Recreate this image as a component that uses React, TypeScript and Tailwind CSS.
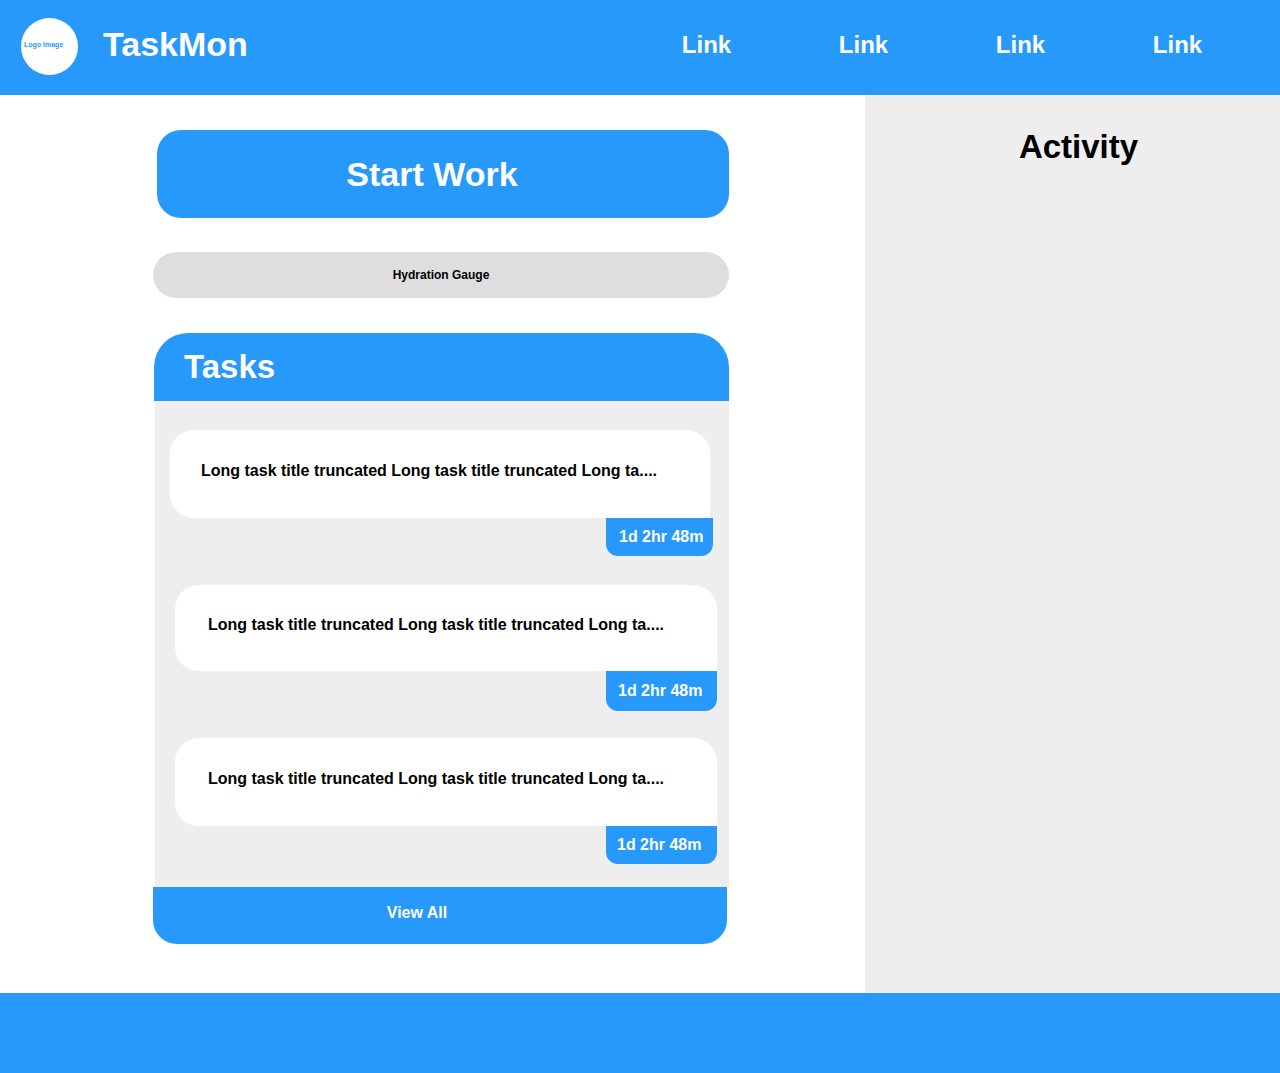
type Task = {
  title: string;
  time: string;
  row: string;
  card: string;
  badge: string;
};

const title = "Long task title truncated Long task title truncated Long ta....";

const tasks: Task[] = [
  {
    title,
    time: "1d 2hr 48m",
    row: "pl-[15px] pr-4",
    card: "mr-[3px] h-[88px] pt-[29px] pl-[31px]",
    badge: "w-[107px] h-[38px] pl-[13px]",
  },
  {
    title,
    time: "1d 2hr 48m",
    row: "pl-5 pr-3",
    card: "h-[86px] pt-7 pl-[33px]",
    badge: "w-[111px] h-10 pl-3",
  },
  {
    title,
    time: "1d 2hr 48m",
    row: "pl-5 pr-3",
    card: "h-[88px] pt-[29px] pl-[33px]",
    badge: "w-[111px] h-[38px] pl-[11px]",
  },
];

const links = ["Link", "Link", "Link", "Link"];

function Header() {
  return (
    <header className="flex h-[95px] items-start justify-between bg-[#2699fb] pl-[21px] pr-6 text-white">
      <div className="flex items-start">
        <div className="mt-[18px] h-[57px] w-[57px] rounded-full bg-white pl-[3px] pt-5 text-[7px] leading-[14px] whitespace-nowrap text-[#2699fb]">
          Logo Image
        </div>
        <h1 className="mt-6 ml-[25px] text-[34px] leading-10">TaskMon</h1>
      </div>
      <nav className="mt-[29px] grid max-w-[628px] flex-1 grid-cols-4 text-center text-2xl">
        {links.map((label, i) => (
          <a key={i} href="#">
            {label}
          </a>
        ))}
      </nav>
    </header>
  );
}

function TaskItem({ task }: { task: Task }) {
  return (
    <li className={`flex flex-col ${task.row}`}>
      <div className={`rounded-3xl rounded-br-none bg-white ${task.card}`}>
        <p className="truncate">{task.title}</p>
      </div>
      <div className={`flex items-center self-end rounded-b-xl bg-[#2699fb] whitespace-nowrap text-white ${task.badge}`}>
        {task.time}
      </div>
    </li>
  );
}

export default function App() {
  return (
    <div className="flex min-h-screen flex-col bg-white font-['Liberation_Sans',Arial,sans-serif] text-base font-bold text-black">
      <Header />
      <div className="flex flex-1">
        <main className="min-w-0 flex-1 pt-[35px] pr-[136px] pb-[49px] pl-[153px]">
          <div className="pl-1">
            <button
              type="button"
              className="h-[88px] w-full rounded-3xl bg-[#2699fb] pr-[22px] text-[34px] leading-10 text-white"
            >
              Start Work
            </button>
          </div>
          <div className="mt-[34px] flex h-[46px] items-center justify-center rounded-full bg-[#dedede] text-xs">
            Hydration Gauge
          </div>
          <section className="mt-[35px]">
            <h2 className="ml-px h-[68px] rounded-t-[34px] bg-[#2699fb] pt-[14px] pl-[30px] text-[33px] leading-10 text-white">
              Tasks
            </h2>
            <ul className="ml-0.5 bg-[#eeeeee] pt-[29px] pb-[23px]">
              {tasks.map((task, i) => (
                <TaskItem key={i} task={{ ...task, row: i === 0 ? `${task.row} pb-[29px]` : i === 1 ? `${task.row} pb-[27px]` : task.row }} />
              ))}
            </ul>
            <div className="pr-0.5">
              <button
                type="button"
                className="h-[57px] w-full rounded-b-3xl bg-[#2699fb] pr-[46px] pb-1.5 text-white"
              >
                View All
              </button>
            </div>
          </section>
        </main>
        <aside className="w-[415px] shrink-0 bg-[#eeeeee] pt-8 pl-3 text-center">
          <h2 className="text-[33px] leading-10">Activity</h2>
        </aside>
      </div>
      <footer className="h-20 bg-[#2699fb]" />
    </div>
  );
}
